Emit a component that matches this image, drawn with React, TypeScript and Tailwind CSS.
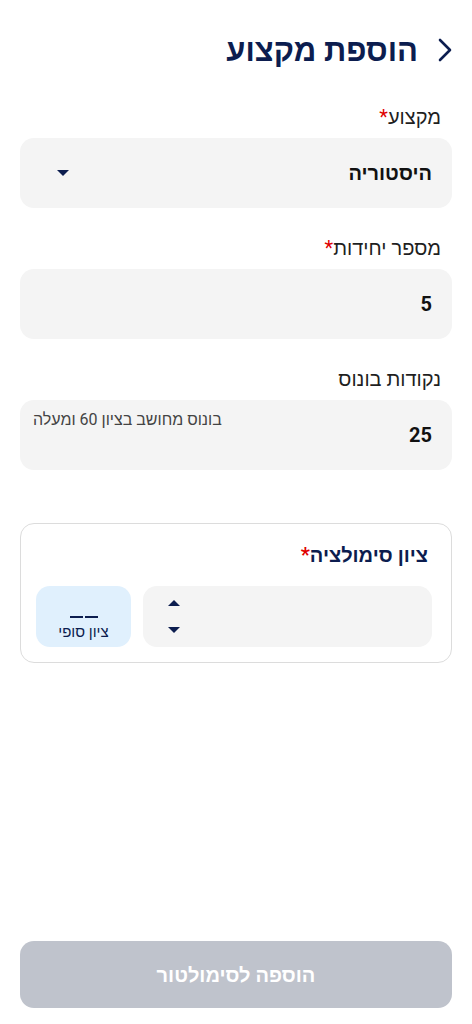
const navy = "text-[#0c1d4f]";

function Label({ text, required }: { text: string; required?: boolean }) {
  return (
    <div className="px-[31px] text-[20px] leading-[24px] text-[#1f1f1f]">
      {text}
      {required && <span className="text-[#e00000]">*</span>}
    </div>
  );
}

function Caret({ up }: { up?: boolean }) {
  return (
    <svg width="14" height="8" viewBox="0 0 14 8" className={up ? "rotate-180" : ""}>
      <path d="M1 1 L13 1 L7 7 Z" fill="#0c1d4f" />
    </svg>
  );
}

export default function App() {
  return (
    <div
      dir="rtl"
      className="w-[472px] h-[1024px] bg-white flex flex-col"
      style={{ fontFamily: 'Roboto, "Liberation Sans", sans-serif' }}
    >
      <header className="flex items-center gap-[20px] pr-[20px] pt-[26px] h-[74px]">
        <svg width="14" height="24" viewBox="0 0 14 24" className="shrink-0">
          <path d="M2 2 L12 12 L2 22" fill="none" stroke="#0c1d4f" strokeWidth="2.6" strokeLinecap="round" strokeLinejoin="round" />
        </svg>
        <h1 className={`text-[31px] font-bold ${navy} leading-none`}>הוספת מקצוע</h1>
      </header>

      <div className="mt-[31px] flex flex-col">
        <Label text="מקצוע" required />
        <div className="mx-[20px] mt-[9px] h-[70px] rounded-[14px] bg-[#f4f4f4] flex items-center justify-between pr-[20px] pl-[36px]">
          <span className="text-[20px] font-bold text-[#111]">היסטוריה</span>
          <Caret />
        </div>
      </div>

      <div className="mt-[28px] flex flex-col">
        <Label text="מספר יחידות" required />
        <div className="mx-[20px] mt-[9px] h-[70px] rounded-[14px] bg-[#f4f4f4] flex items-center pr-[20px]">
          <span className="text-[20px] font-bold text-[#111]">5</span>
        </div>
      </div>

      <div className="mt-[28px] flex flex-col">
        <Label text="נקודות בונוס" />
        <div className="mx-[20px] mt-[9px] h-[70px] rounded-[14px] bg-[#f4f4f4] relative flex items-center pr-[20px]">
          <span className="text-[20px] font-bold text-[#111]">25</span>
          <span className="absolute left-[13px] top-[8px] text-[16px] text-[#444]">בונוס מחושב בציון 60 ומעלה</span>
        </div>
      </div>

      <div className="mx-[20px] mt-[53px] h-[140px] rounded-[14px] border border-[#dcdcdc] flex flex-col pl-[15px] pr-[19px]">
        <div className={`mt-[16px] pr-[4px] text-[20px] font-bold ${navy}`}>
          ציון סימולציה<span className="text-[#e00000]">*</span>
        </div>
        <div className="mt-[16px] flex gap-[12px]">
          <div className="flex-1 h-[61px] rounded-[14px] bg-[#f4f4f4] flex items-center justify-end pl-[24px]">
            <div className="flex flex-col gap-[19px]">
              <Caret up />
              <Caret />
            </div>
          </div>
          <div className="w-[95px] h-[61px] rounded-[14px] bg-[#e0f0fd] flex flex-col items-center justify-end pb-[6px]">
            <div className="flex gap-[2px] mb-[5px]">
              <div className="w-[13px] h-[2px] bg-[#0c1d4f]" />
              <div className="w-[13px] h-[2px] bg-[#0c1d4f]" />
            </div>
            <span className={`text-[15px] ${navy} leading-[18px]`}>ציון סופי</span>
          </div>
        </div>
      </div>

      <div className="flex-1" />
      <button className="mx-[20px] mb-[16px] h-[67px] rounded-[14px] bg-[#bfc3cc] text-white text-[20px] font-bold">
        הוספה לסימולטור
      </button>
    </div>
  );
}
